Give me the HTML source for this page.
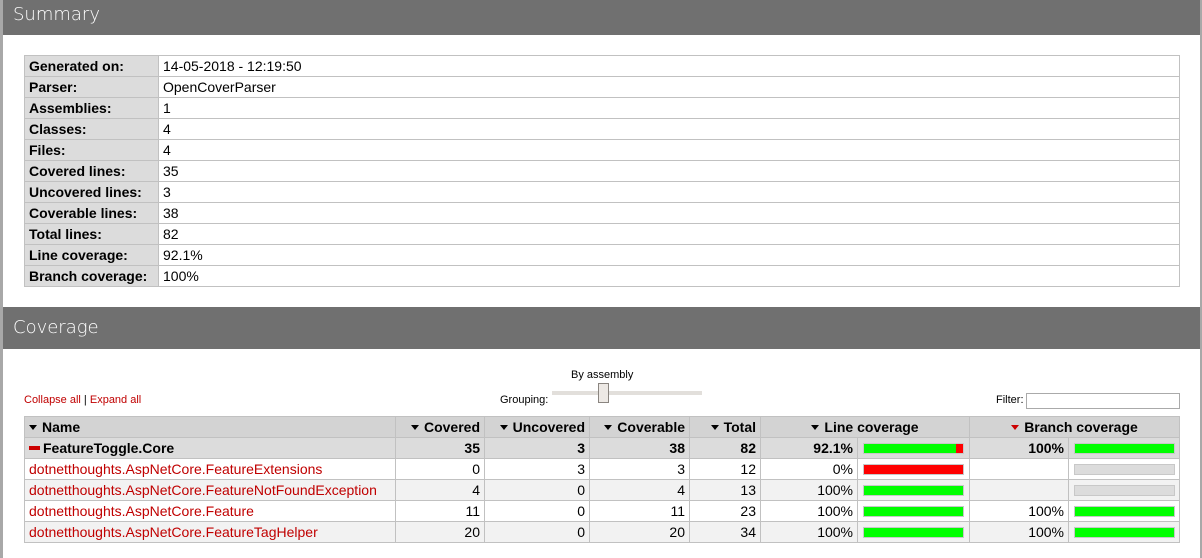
<!DOCTYPE html>
<html><head><meta charset="utf-8"><style>
*{box-sizing:border-box}
body{margin:0;width:1202px;height:558px;overflow:hidden;background:#fff;font-family:"Liberation Sans",Arial,sans-serif;font-size:13px;color:#000;position:relative}
.lb{position:absolute;left:0;top:0;width:3px;height:558px;background:#a8a8a8}
.rb{position:absolute;left:1200px;top:0;width:2px;height:558px;background:#a8a8a8}
.hd{position:absolute;left:3px;width:1197px;background:#707070;color:#fff;font-size:18px;padding-left:10px;font-family:"DejaVu Sans","Liberation Sans",sans-serif;font-weight:300}
table{border-collapse:collapse;position:absolute;left:24px;width:1156px;table-layout:fixed}
td,th{border:1px solid #c1c1c1;height:21px;padding:0 4px;white-space:nowrap;overflow:hidden}
.sum td,.sum th{font-size:14px;padding:0 5px 0 4px}
.sum th{background:#dcdcdc;text-align:left;font-weight:bold}
.cov th{background:#d3d3d3;font-weight:bold;font-size:14px;height:21px}
.cov td{text-align:right;font-size:14px}
.cov td.n{text-align:left;color:#c00000}
.cov tr.g td{background:#dcdcdc;font-weight:bold}
.cov tr.a td{background:#f2f2f2}
.ar{display:inline-block;width:0;height:0;border-left:4px solid transparent;border-right:4px solid transparent;border-top:5px solid #000;margin-right:5px;vertical-align:2px}
.ar.r{border-top-color:#c00}
.bar{display:block;width:101px;height:11px;border:1px solid #c8c8c8;background:#dcdcdc;margin-left:auto;margin-right:auto;position:relative}
.bar i{position:absolute;top:0;bottom:0;left:0}
a{color:#c00000;text-decoration:none}
</style></head><body>
<div class="lb"></div><div class="rb"></div>
<div class="hd" style="top:0;height:35px;line-height:30px">Summary</div>
<table class="sum" style="top:55px">
<col style="width:134px"><col>
<tr><th>Generated on:</th><td>14-05-2018 - 12:19:50</td></tr>
<tr><th>Parser:</th><td>OpenCoverParser</td></tr>
<tr><th>Assemblies:</th><td>1</td></tr>
<tr><th>Classes:</th><td>4</td></tr>
<tr><th>Files:</th><td>4</td></tr>
<tr><th>Covered lines:</th><td>35</td></tr>
<tr><th>Uncovered lines:</th><td>3</td></tr>
<tr><th>Coverable lines:</th><td>38</td></tr>
<tr><th>Total lines:</th><td>82</td></tr>
<tr><th>Line coverage:</th><td>92.1%</td></tr>
<tr><th>Branch coverage:</th><td>100%</td></tr>
</table>
<div class="hd" style="top:307px;height:42px;line-height:42px">Coverage</div>
<div style="position:absolute;left:24px;top:394px;font-size:11px"><a>Collapse all</a> | <a>Expand all</a></div>
<div style="position:absolute;left:500px;top:394px;font-size:11px">Grouping:</div>
<div style="position:absolute;left:571px;top:369px;font-size:11px">By assembly</div>
<div style="position:absolute;left:552px;top:391px;width:150px;height:4px;background:#e2dfdb"></div>
<div style="position:absolute;left:598px;top:383px;width:11px;height:20px;border:1px solid #8a8580;background:#ede9e5"></div>
<div style="position:absolute;left:996px;top:394px;font-size:11px">Filter:</div>
<div style="position:absolute;left:1026px;top:393px;width:154px;height:16px;border:1px solid #aaa"></div>
<table class="cov" style="top:416px">
<col style="width:371px"><col style="width:89px"><col style="width:105px"><col style="width:100px"><col style="width:71px"><col style="width:97px"><col style="width:112px"><col style="width:99px"><col>
<tr><th style="text-align:left"><span class="ar"></span>Name</th><th style="text-align:right"><span class="ar"></span>Covered</th><th style="text-align:right"><span class="ar"></span>Uncovered</th><th style="text-align:right"><span class="ar"></span>Coverable</th><th style="text-align:right"><span class="ar"></span>Total</th><th colspan="2"><span class="ar"></span>Line coverage</th><th colspan="2"><span class="ar r"></span>Branch coverage</th></tr>
<tr class="g"><td class="n" style="color:#000"><span style="display:inline-block;width:11px;height:4px;background:#c00;vertical-align:3px;margin-right:3px"></span>FeatureToggle.Core</td><td>35</td><td>3</td><td>38</td><td>82</td><td>92.1%</td><td><span class="bar"><i style="width:92px;background:#0f0"></i><i style="left:92px;width:7px;background:#f00"></i></span></td><td>100%</td><td><span class="bar"><i style="width:99px;background:#0f0"></i></span></td></tr>
<tr><td class="n">dotnetthoughts.AspNetCore.FeatureExtensions</td><td>0</td><td>3</td><td>3</td><td>12</td><td>0%</td><td><span class="bar"><i style="width:99px;background:#f00"></i></span></td><td></td><td><span class="bar"></span></td></tr>
<tr class="a"><td class="n">dotnetthoughts.AspNetCore.FeatureNotFoundException</td><td>4</td><td>0</td><td>4</td><td>13</td><td>100%</td><td><span class="bar"><i style="width:99px;background:#0f0"></i></span></td><td></td><td><span class="bar"></span></td></tr>
<tr><td class="n">dotnetthoughts.AspNetCore.Feature</td><td>11</td><td>0</td><td>11</td><td>23</td><td>100%</td><td><span class="bar"><i style="width:99px;background:#0f0"></i></span></td><td>100%</td><td><span class="bar"><i style="width:99px;background:#0f0"></i></span></td></tr>
<tr class="a"><td class="n">dotnetthoughts.AspNetCore.FeatureTagHelper</td><td>20</td><td>0</td><td>20</td><td>34</td><td>100%</td><td><span class="bar"><i style="width:99px;background:#0f0"></i></span></td><td>100%</td><td><span class="bar"><i style="width:99px;background:#0f0"></i></span></td></tr>
</table>
</body></html>
